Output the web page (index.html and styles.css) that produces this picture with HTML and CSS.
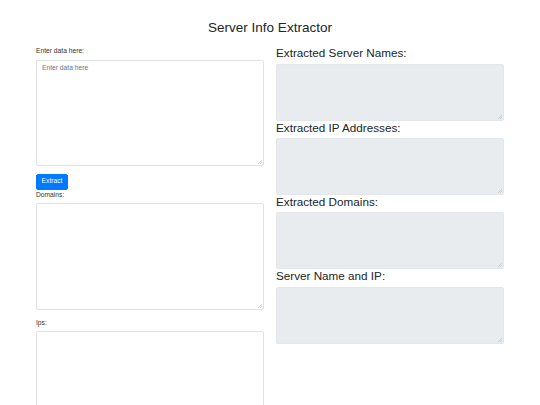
FILE: index.html
```html
<!DOCTYPE html>
<html>
<head>
<meta charset="utf-8">
<title>Server Info Extractor</title>
<link rel="stylesheet" href="styles.css">
</head>
<body>
<div class="page">
  <h2 class="title">Server Info Extractor</h2>
  <div class="row">
    <div class="col">
      <label class="lbl">Enter data here:</label>
      <div class="wrap"><textarea class="field input-main" placeholder="Enter data here"></textarea><svg class="grip" width="5" height="5" viewBox="0 0 5 5"><path d="M1 5L5 1M3 5L5 3" stroke="#c4c4c4" stroke-width="0.8"/></svg></div>
      <button class="btn">Extract</button>
      <label class="lbl">Domains:</label>
      <div class="wrap"><textarea class="field input-list"></textarea><svg class="grip" width="5" height="5" viewBox="0 0 5 5"><path d="M1 5L5 1M3 5L5 3" stroke="#c4c4c4" stroke-width="0.8"/></svg></div>
      <label class="lbl lbl-gap">Ips:</label>
      <div class="wrap"><textarea class="field input-list"></textarea><svg class="grip" width="5" height="5" viewBox="0 0 5 5"><path d="M1 5L5 1M3 5L5 3" stroke="#c4c4c4" stroke-width="0.8"/></svg></div>
    </div>
    <div class="col">
      <h3 class="head">Extracted Server Names:</h3>
      <div class="wrap"><textarea class="field out" readonly></textarea><svg class="grip" width="5" height="5" viewBox="0 0 5 5"><path d="M1 5L5 1M3 5L5 3" stroke="#c4c4c4" stroke-width="0.8"/></svg></div>
      <h3 class="head">Extracted IP Addresses:</h3>
      <div class="wrap"><textarea class="field out" readonly></textarea><svg class="grip" width="5" height="5" viewBox="0 0 5 5"><path d="M1 5L5 1M3 5L5 3" stroke="#c4c4c4" stroke-width="0.8"/></svg></div>
      <h3 class="head">Extracted Domains:</h3>
      <div class="wrap"><textarea class="field out" readonly></textarea><svg class="grip" width="5" height="5" viewBox="0 0 5 5"><path d="M1 5L5 1M3 5L5 3" stroke="#c4c4c4" stroke-width="0.8"/></svg></div>
      <h3 class="head">Server Name and IP:</h3>
      <div class="wrap"><textarea class="field out" readonly></textarea><svg class="grip" width="5" height="5" viewBox="0 0 5 5"><path d="M1 5L5 1M3 5L5 3" stroke="#c4c4c4" stroke-width="0.8"/></svg></div>
    </div>
  </div>
</div>
</body>
</html>
```

FILE: styles.css
```css
* { box-sizing: border-box; }
html, body {
  margin: 0;
  padding: 0;
  background: #fff;
  font-family: "Liberation Sans", Arial, sans-serif;
  color: #212529;
}
.page {
  width: 468px;
  margin: 0 auto;
  padding-top: 20px;
}
.title {
  margin: 0 0 10px;
  font-size: 13.5px;
  font-weight: 400;
  line-height: 1.2;
  text-align: center;
}
.row {
  display: flex;
  gap: 12px;
  align-items: flex-start;
}
.col {
  flex: 1;
  display: flex;
  flex-direction: column;
  align-items: stretch;
}
.lbl {
  display: block;
  font-size: 6.7px;
  line-height: 10px;
  margin-bottom: 3.4px;
  color: #333;
}
.lbl-gap { margin-top: 8px; }
.wrap {
  position: relative;
}
.grip {
  position: absolute;
  right: 2px;
  bottom: 2px;
  display: block;
  pointer-events: none;
}
.field {
  display: block;
  width: 100%;
  font-family: "Liberation Sans", Arial, sans-serif;
  font-size: 6.7px;
  line-height: 1.5;
  padding: 2.5px 5px;
  border: 1px solid #dfe2e6;
  border-radius: 2px;
  background: #fff;
  color: #495057;
  margin: 0;
  outline: none;
  resize: none;
}
.field::placeholder { color: #6c757d; }
.input-main { height: 106px; }
.input-list { height: 107px; }
.btn {
  align-self: flex-start;
  margin-top: 8px;
  width: 32px;
  height: 16px;
  padding: 0;
  border: 1px solid #007bff;
  border-radius: 2px;
  background: #007bff;
  color: #fff;
  font-family: "Liberation Sans", Arial, sans-serif;
  font-size: 6.7px;
  line-height: 1;
}
.head {
  margin: 0 0 3.4px;
  font-size: 11.7px;
  font-weight: 400;
  line-height: 14px;
}
.out {
  height: 57px;
  background: #e9ecef;
  border-color: #e3e6ea;
}
```
